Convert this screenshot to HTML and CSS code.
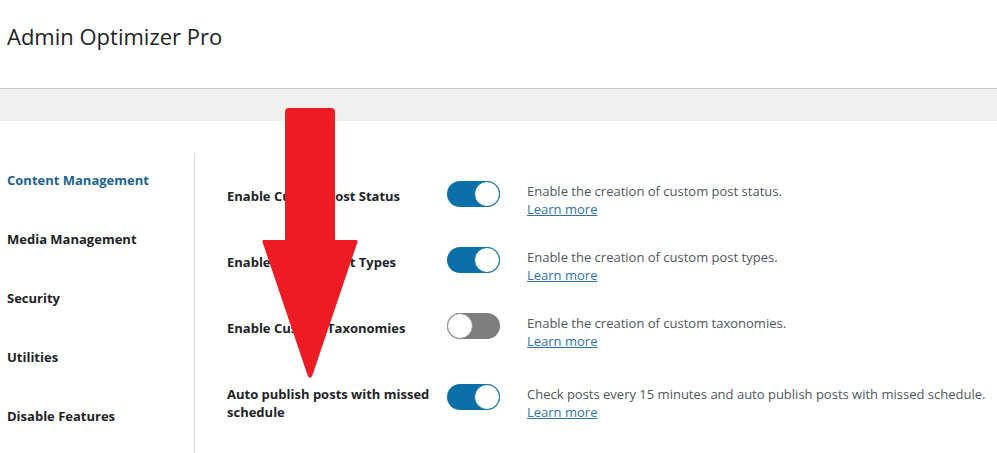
FILE: index.html
```html
<!DOCTYPE html>
<html lang="en">

<head>
    <meta charset="UTF-8">
    <meta name="viewport" content="width=device-width, initial-scale=1.0">
    <title>Admin Optimizer Pro</title>
    <link rel="stylesheet" href="styles.css">
</head>

<body>
    <header class="page-header">
        <h1>Admin Optimizer Pro</h1>
    </header>

    <div class="toolbar"></div>

    <div class="settings">
        <nav class="settings-nav">
            <ul>
                <li><a href="#" class="active">Content Management</a></li>
                <li><a href="#">Media Management</a></li>
                <li><a href="#">Security</a></li>
                <li><a href="#">Utilities</a></li>
                <li><a href="#">Disable Features</a></li>
            </ul>
        </nav>

        <div class="settings-form">
            <div class="setting-row">
                <div class="setting-label">Enable Custom Post Status</div>
                <div class="setting-control">
                    <span class="toggle on"></span>
                    <div class="setting-desc">
                        Enable the creation of custom post status.<br>
                        <a href="#">Learn more</a>
                    </div>
                </div>
            </div>

            <div class="setting-row">
                <div class="setting-label">Enable Custom Post Types</div>
                <div class="setting-control">
                    <span class="toggle on"></span>
                    <div class="setting-desc">
                        Enable the creation of custom post types.<br>
                        <a href="#">Learn more</a>
                    </div>
                </div>
            </div>

            <div class="setting-row">
                <div class="setting-label">Enable Custom Taxonomies</div>
                <div class="setting-control">
                    <span class="toggle"></span>
                    <div class="setting-desc">
                        Enable the creation of custom taxonomies.<br>
                        <a href="#">Learn more</a>
                    </div>
                </div>
            </div>

            <div class="setting-row">
                <div class="setting-label">Auto publish posts with missed schedule</div>
                <div class="setting-control">
                    <span class="toggle on"></span>
                    <div class="setting-desc">
                        Check posts every 15 minutes and auto publish posts with missed schedule.<br>
                        <a href="#">Learn more</a>
                    </div>
                </div>
            </div>
        </div>
    </div>

    <!-- annotation arrow drawn over the screenshot -->
    <svg class="annotation" width="997" height="453" viewBox="0 0 997 453">
        <path d="M285 112 Q285 108 289 108 L331 108 Q335 108 335 112 L335 240 L356 240 Q358 240 357.5 242 L312.5 375 Q310 381 307.5 375 L262.5 242 Q262 240 264 240 L285 240 Z" fill="#ed1c24" />
    </svg>
</body>

</html>
```

FILE: styles.css
```css
/* Global Styles */
body {
    margin: 0;
    font-family: 'Open Sans', 'Noto Sans', sans-serif;
    background-color: #fff;
    color: #1d2327;
    font-size: 13px;
}

a {
    color: inherit;
    text-decoration: none;
}

/* Header */
.page-header {
    height: 89px;
    box-sizing: border-box;
    padding: 21px 7px 0;
    border-bottom: 1px solid #c8c8c8;
}

.page-header h1 {
    margin: 0;
    font-size: 22px;
    font-weight: 400;
    line-height: 30px;
}

.toolbar {
    height: 32px;
    background-color: #f0f0f0;
}

/* Settings layout */
.settings {
    display: flex;
    padding-top: 32px;
}

.settings-nav {
    width: 194px;
    border-right: 1px solid #dcdcde;
    min-height: 300px;
}

.settings-nav ul {
    list-style: none;
    margin: 0;
    padding: 0 0 0 7px;
}

.settings-nav li {
    padding: 18px 0 23px;
    line-height: 18px;
    font-weight: 700;
}

.settings-nav a.active {
    color: #1b6391;
}

.settings-form {
    padding: 14px 0 0 32px;
    flex: 1;
}

.setting-row {
    display: flex;
}

.setting-label {
    width: 220px;
    box-sizing: border-box;
    padding: 20px 10px 20px 0;
    line-height: 18px;
    font-weight: 700;
}

.setting-control {
    display: flex;
    align-items: flex-start;
    gap: 27px;
    padding: 15px 0;
    align-self: center;
}

.setting-desc {
    line-height: 18px;
    color: #50575e;
    white-space: nowrap;
}

.setting-desc a {
    color: #2f73ab;
    text-decoration: underline;
}

/* Toggle switch */
.toggle {
    position: relative;
    display: block;
    width: 53px;
    height: 26px;
    margin-top: -1px;
    border-radius: 13px;
    background-color: #7e7e7e;
    flex-shrink: 0;
}

.toggle::after {
    content: "";
    position: absolute;
    top: 0;
    left: 0;
    width: 24px;
    height: 24px;
    border-radius: 50%;
    background-color: #fff;
    border: 1px solid #8a8a8a;
}

.toggle.on {
    background-color: #0b6fa8;
}

.toggle.on::after {
    left: 27px;
    border-color: #0b6fa8;
}

/* Arrow overlay */
.annotation {
    position: absolute;
    top: 0;
    left: 0;
    pointer-events: none;
}
```
